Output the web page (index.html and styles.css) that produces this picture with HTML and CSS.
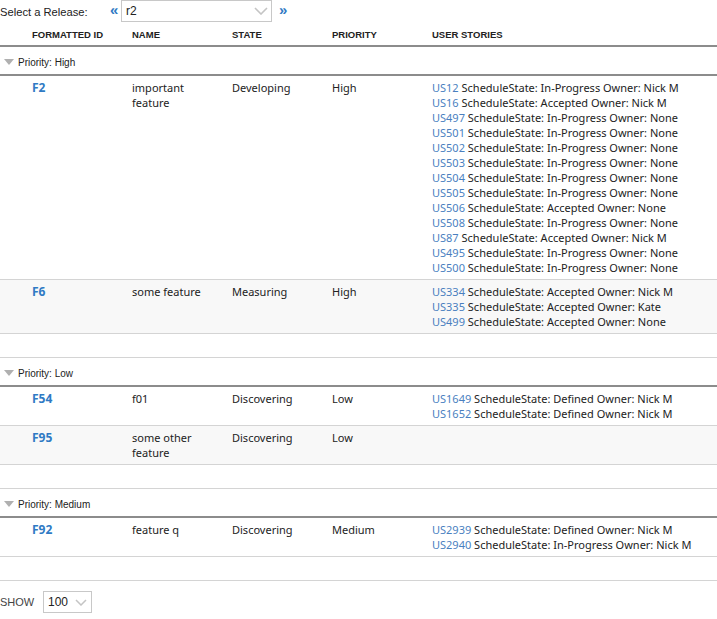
FILE: index.html
```html
<!DOCTYPE html>
<html>
<head>
<meta charset="utf-8">
<link rel="stylesheet" href="styles.css">
</head>
<body>
<div class="toolbar">
  <span class="label">Select a Release:</span>
  <span class="nav">&laquo;</span>
  <div class="combo">
    <span class="combo-val">r2</span>
    <svg class="chev" width="14" height="8" viewBox="0 0 14 8"><path d="M1 1 L7 7 L13 1" fill="none" stroke="#c4c4c4" stroke-width="1.6"/></svg>
  </div>
  <span class="nav">&raquo;</span>
</div>

<div class="grid">
  <div class="hdr cols">
    <div class="c">FORMATTED ID</div>
    <div class="c">NAME</div>
    <div class="c">STATE</div>
    <div class="c">PRIORITY</div>
    <div class="c">USER STORIES</div>
  </div>

  <div class="ghead"><span class="tri"></span>Priority: High</div>
  <div class="row cols">
    <div class="c id">F2</div>
    <div class="c">important<br>feature</div>
    <div class="c">Developing</div>
    <div class="c">High</div>
    <div class="c stories">
      <div><a>US12</a> ScheduleState: In-Progress Owner: Nick M</div>
      <div><a>US16</a> ScheduleState: Accepted Owner: Nick M</div>
      <div><a>US497</a> ScheduleState: In-Progress Owner: None</div>
      <div><a>US501</a> ScheduleState: In-Progress Owner: None</div>
      <div><a>US502</a> ScheduleState: In-Progress Owner: None</div>
      <div><a>US503</a> ScheduleState: In-Progress Owner: None</div>
      <div><a>US504</a> ScheduleState: In-Progress Owner: None</div>
      <div><a>US505</a> ScheduleState: In-Progress Owner: None</div>
      <div><a>US506</a> ScheduleState: Accepted Owner: None</div>
      <div><a>US508</a> ScheduleState: In-Progress Owner: None</div>
      <div><a>US87</a> ScheduleState: Accepted Owner: Nick M</div>
      <div><a>US495</a> ScheduleState: In-Progress Owner: None</div>
      <div><a>US500</a> ScheduleState: In-Progress Owner: None</div>
    </div>
  </div>
  <div class="row cols alt">
    <div class="c id">F6</div>
    <div class="c">some feature</div>
    <div class="c">Measuring</div>
    <div class="c">High</div>
    <div class="c stories">
      <div><a>US334</a> ScheduleState: Accepted Owner: Nick M</div>
      <div><a>US335</a> ScheduleState: Accepted Owner: Kate</div>
      <div><a>US499</a> ScheduleState: Accepted Owner: None</div>
    </div>
  </div>
  <div class="gfoot"></div>

  <div class="ghead"><span class="tri"></span>Priority: Low</div>
  <div class="row cols">
    <div class="c id">F54</div>
    <div class="c">f01</div>
    <div class="c">Discovering</div>
    <div class="c">Low</div>
    <div class="c stories">
      <div><a>US1649</a> ScheduleState: Defined Owner: Nick M</div>
      <div><a>US1652</a> ScheduleState: Defined Owner: Nick M</div>
    </div>
  </div>
  <div class="row cols alt">
    <div class="c id">F95</div>
    <div class="c">some other<br>feature</div>
    <div class="c">Discovering</div>
    <div class="c">Low</div>
    <div class="c stories"></div>
  </div>
  <div class="gfoot"></div>

  <div class="ghead"><span class="tri"></span>Priority: Medium</div>
  <div class="row cols">
    <div class="c id">F92</div>
    <div class="c">feature q</div>
    <div class="c">Discovering</div>
    <div class="c">Medium</div>
    <div class="c stories">
      <div><a>US2939</a> ScheduleState: Defined Owner: Nick M</div>
      <div><a>US2940</a> ScheduleState: In-Progress Owner: Nick M</div>
    </div>
  </div>
  <div class="gfoot"></div>
</div>

<div class="pager">
  <span class="show">SHOW</span>
  <div class="pcombo">
    <span>100</span>
    <svg width="12" height="7" viewBox="0 0 12 7"><path d="M1 1 L6 6 L11 1" fill="none" stroke="#c4c4c4" stroke-width="1.5"/></svg>
  </div>
</div>
</body>
</html>
```

FILE: styles.css
```css
html, body {
  margin: 0;
  padding: 0;
  background: #fff;
}
body {
  font-family: "Noto Sans", "Open Sans", sans-serif;
  font-size: 11px;
  color: #222;
  width: 717px;
  overflow: hidden;
}
.toolbar {
  display: flex;
  align-items: center;
  height: 22px;
}
.label {
  font-family: "Liberation Sans", Arial, sans-serif;
  font-size: 11.2px;
  color: #222;
  width: 110px;
  padding-top: 1px;
}
.nav {
  font-family: "Liberation Sans", Arial, sans-serif;
  color: #2f7ac4;
  font-weight: bold;
  font-size: 15px;
  width: 11px;
  margin-top: -3px;
}
.nav:last-child {
  margin-left: 7px;
}
.combo {
  box-sizing: border-box;
  width: 151px;
  height: 22px;
  border: 1px solid #c8c8c8;
  display: flex;
  align-items: center;
  justify-content: space-between;
  padding: 0 3px 0 4px;
}
.combo-val {
  font-family: "Liberation Sans", Arial, sans-serif;
  font-size: 12px;
  color: #222;
}
.cols {
  display: grid;
  grid-template-columns: 132px 100px 100px 100px 1fr;
}
.cols .c:first-child {
  padding-left: 32px;
}
.hdr {
  height: 21px;
  align-items: center;
  border-bottom: 2px solid #8c8c8c;
  font-family: "Liberation Sans", Arial, sans-serif;
  font-weight: bold;
  font-size: 9.5px;
  color: #222;
  padding-top: 2px;
}
.hdr .c {
  line-height: 21px;
}
.ghead {
  box-sizing: border-box;
  height: 29px;
  border-bottom: 2px solid #8c8c8c;
  display: flex;
  align-items: center;
  font-family: "Liberation Sans", Arial, sans-serif;
  font-size: 10px;
  color: #222;
  padding-top: 3px;
}
.tri {
  width: 0;
  height: 0;
  border-left: 5px solid transparent;
  border-right: 5px solid transparent;
  border-top: 6px solid #b0b0b0;
  margin: 0 4px 0 4px;
}
.row {
  padding: 4px 0 4px;
  line-height: 15px;
  border-bottom: 1px solid #d4d4d4;
}
.row.alt {
  background: #f8f8f8;
}
.id {
  font-weight: bold;
  font-size: 12px;
  color: #2f7ac4;
}
.stories a {
  color: #4a7fbf;
}
.gfoot {
  height: 23px;
  border-bottom: 1px solid #d4d4d4;
}
.pager {
  display: flex;
  align-items: center;
  height: 42px;
}
.show {
  font-family: "Liberation Sans", Arial, sans-serif;
  font-size: 11px;
  color: #444;
  width: 43px;
}
.pcombo {
  box-sizing: border-box;
  width: 49px;
  height: 22px;
  border: 1px solid #c8c8c8;
  display: flex;
  align-items: center;
  justify-content: space-between;
  padding: 0 4px 0 4px;
  font-family: "Liberation Sans", Arial, sans-serif;
  font-size: 12px;
  color: #222;
}
```
